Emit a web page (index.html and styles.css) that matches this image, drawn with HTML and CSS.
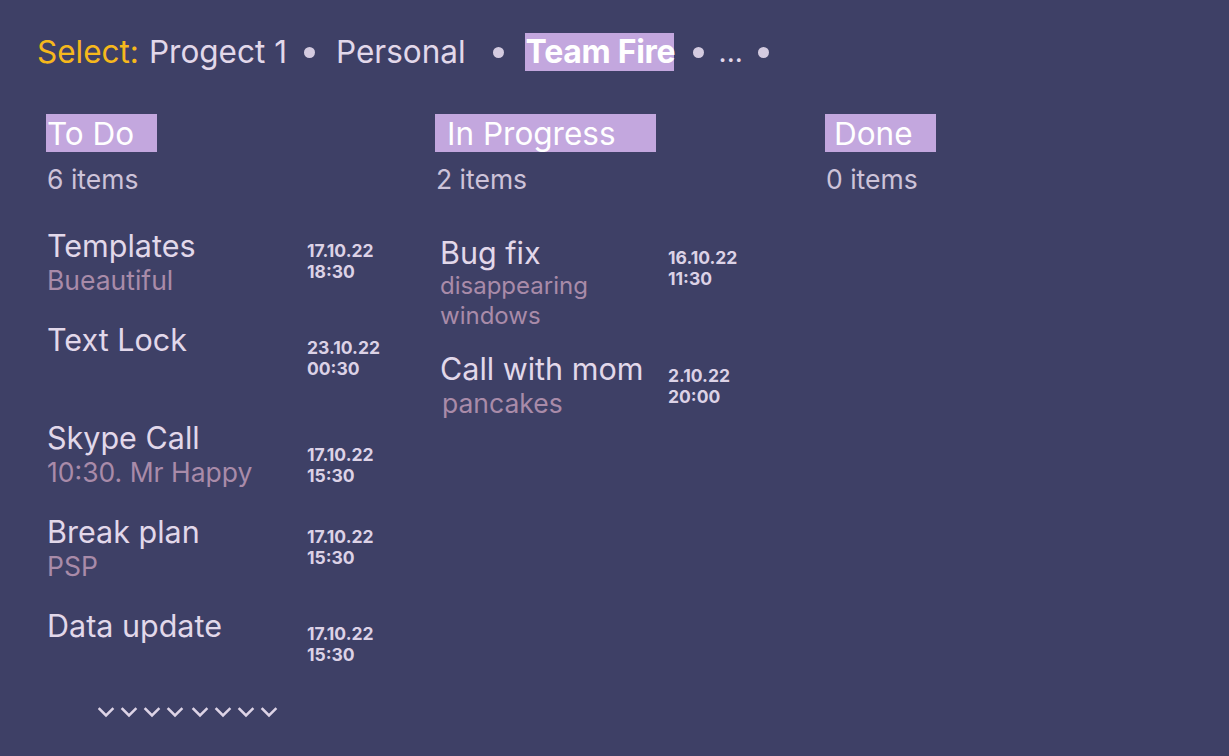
FILE: index.html
```html
<!DOCTYPE html>
<html lang="en">
<head>
<meta charset="utf-8">
<title>Board</title>
<link rel="stylesheet" href="styles.css">
</head>
<body>
<div class="page">
  <nav class="selector">
    <span class="sel-label">Select:</span>
    <span class="sel-item sel-first">Progect 1</span>
    <span class="dot dot-1"></span>
    <span class="sel-item">Personal</span>
    <span class="dot dot-2"></span>
    <span class="sel-item sel-active">Team Fire</span>
    <span class="dot dot-3"></span>
    <span class="sel-item sel-more">...</span>
    <span class="dot dot-4"></span>
  </nav>

  <main class="board">
    <section class="column col-todo">
      <h2 class="col-title title-todo">To Do</h2>
      <div class="col-count">6 items</div>
      <ul class="tasks">
        <li class="task">
          <div class="task-text"><div class="task-name">Templates</div><div class="task-sub">Bueautiful</div></div>
          <div class="task-date">17.10.22<br>18:30</div>
        </li>
        <li class="task task-nosub">
          <div class="task-text"><div class="task-name">Text Lock</div></div>
          <div class="task-date date-low">23.10.22<br>00:30</div>
        </li>
        <li class="task">
          <div class="task-text"><div class="task-name">Skype Call</div><div class="task-sub">10:30. Mr Happy</div></div>
          <div class="task-date date-lower">17.10.22<br>15:30</div>
        </li>
        <li class="task">
          <div class="task-text"><div class="task-name">Break plan</div><div class="task-sub">PSP</div></div>
          <div class="task-date">17.10.22<br>15:30</div>
        </li>
        <li class="task">
          <div class="task-text"><div class="task-name">Data update</div></div>
          <div class="task-date date-low">17.10.22<br>15:30</div>
        </li>
      </ul>
      <div class="more">
        <svg width="184" height="14" viewBox="0 0 184 14" aria-hidden="true">
          <g fill="none" stroke="#ddd3e6" stroke-width="2.5" stroke-linecap="square">
            <path d="M1.5 3 L8 9.5 L14.5 3"/>
            <path d="M24.5 3 L31 9.5 L37.5 3"/>
            <path d="M47.5 3 L54 9.5 L60.5 3"/>
            <path d="M70.5 3 L77 9.5 L83.5 3"/>
            <path d="M95.5 3 L102 9.5 L108.5 3"/>
            <path d="M118.5 3 L125 9.5 L131.5 3"/>
            <path d="M141.5 3 L148 9.5 L154.5 3"/>
            <path d="M164.5 3 L171 9.5 L177.5 3"/>
          </g>
        </svg>
      </div>
    </section>

    <section class="column col-progress">
      <h2 class="col-title title-progress">In Progress</h2>
      <div class="col-count">2 items</div>
      <ul class="tasks tasks-progress">
        <li class="task">
          <div class="task-text"><div class="task-name">Bug fix</div><div class="task-sub sub-small">disappearing<br>windows</div></div>
          <div class="task-date">16.10.22<br>11:30</div>
        </li>
        <li class="task">
          <div class="task-text"><div class="task-name">Call with mom</div><div class="task-sub sub-indent">pancakes</div></div>
          <div class="task-date date-mid">2.10.22<br>20:00</div>
        </li>
      </ul>
    </section>

    <section class="column col-done">
      <h2 class="col-title title-done">Done</h2>
      <div class="col-count">0 items</div>
    </section>
  </main>
</div>
</body>
</html>
```

FILE: styles.css
```css
* { box-sizing: border-box; }
html, body {
  margin: 0;
  padding: 0;
  background: #3e4066;
  height: 100%;
}
body {
  font-family: Inter, "Noto Sans", sans-serif;
  color: #e2d8ea;
}
.page {
  padding: 33px 0 0 37px;
}
.selector {
  display: flex;
  align-items: center;
  height: 38px;
  font-size: 31.5px;
  line-height: 38px;
  color: #e2d8ea;
}
.sel-label { color: #f6b81c; }
.sel-first { margin-left: 10px; }
.dot {
  width: 11px;
  height: 11px;
  border-radius: 50%;
  background: #d4cbe0;
  flex: none;
}
.dot-1 { margin: 0 21px 0 17px; }
.dot-2 { margin: 0 21px 0 27px; }
.dot-3 { margin: 0 15px 0 19px; }
.dot-4 { margin-left: 15px; }
.sel-active {
  background: #c3a7de;
  color: #ffffff;
  font-weight: 700;
  padding: 0 0 0 1px;
  width: 149px;
  font-size: 32px;
  white-space: nowrap;
  letter-spacing: -0.3px;
}
.sel-more { font-size: 28px; }

.board {
  display: grid;
  grid-template-columns: 389px 390px 360px;
  margin-top: 43px;
  margin-left: 9px;
}
.col-title {
  margin: 0;
  height: 38px;
  line-height: 40px;
  font-size: 31.5px;
  font-weight: 400;
  color: #ffffff;
  background: #c3a7de;
  white-space: nowrap;
}
.title-todo { width: 111px; padding-left: 1px; }
.title-progress { width: 221px; padding-left: 12px; }
.title-done { width: 111px; padding-left: 9px; }
.col-count {
  margin-top: 12px;
  font-size: 26.5px;
  line-height: 30px;
  color: #cdc3d9;
  padding-left: 1px;
}
.tasks {
  list-style: none;
  margin: 36px 0 0;
  padding: 0 0 0 1px;
}
.tasks-progress {
  margin-top: 43px;
  padding-left: 5px;
}
.task {
  display: flex;
  align-items: flex-start;
  min-height: 94px;
}
.task-nosub { min-height: 98px; }
.task-text { width: 260px; flex: none; }
.tasks-progress .task-text { width: 228px; }
.tasks-progress .task { min-height: 116px; }
.task-name {
  font-size: 30.5px;
  line-height: 32px;
  color: #e2d8ea;
  white-space: nowrap;
}
.task-sub {
  font-size: 26.5px;
  line-height: 30px;
  color: #a98ba9;
  margin-top: 3px;
  white-space: nowrap;
}
.sub-small {
  font-size: 24px;
  letter-spacing: 0;
  margin-top: 2px;
}
.sub-indent { padding-left: 2px; }
.task-date {
  font-size: 17.5px;
  font-weight: 700;
  line-height: 21px;
  color: #dcd2e6;
  padding-top: 10px;
}
.date-low { padding-top: 13px; }
.date-lower { padding-top: 22px; }
.date-mid { padding-top: 12px; }
.more {
  margin-top: 2px;
  padding-left: 52px;
  line-height: 0;
}
```
